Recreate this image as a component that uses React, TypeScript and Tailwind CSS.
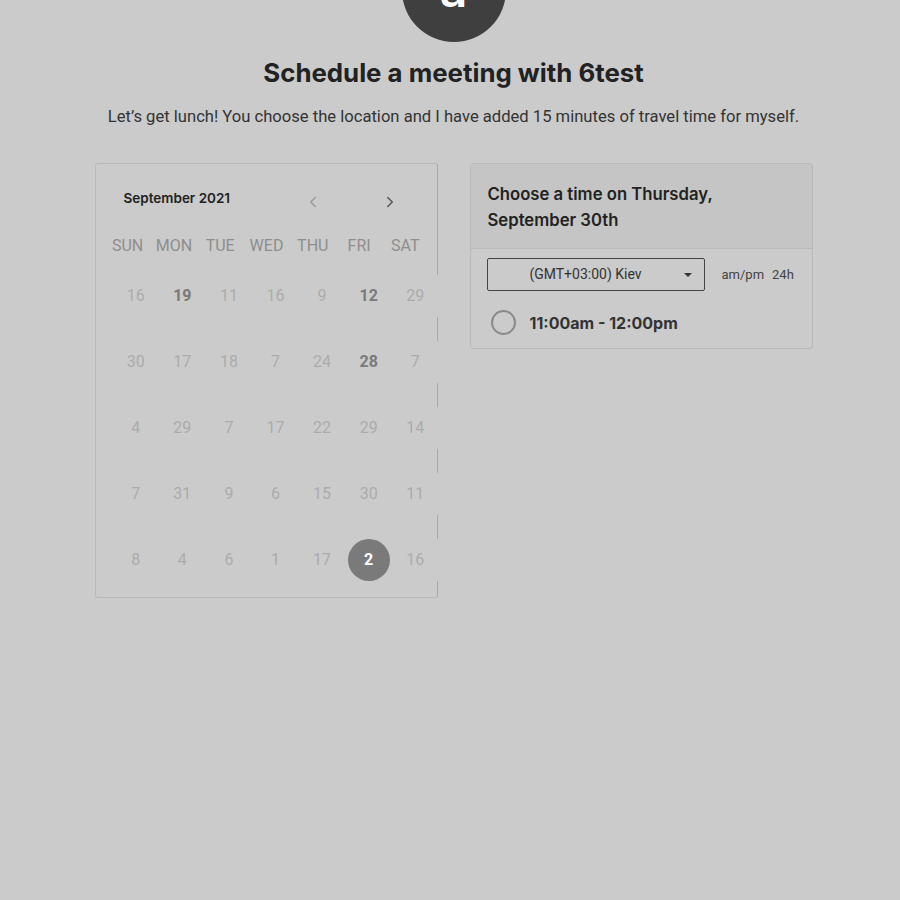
const weeks: { d: number; bold?: boolean; sel?: boolean }[][] = [
  [{ d: 16 }, { d: 19, bold: true }, { d: 11 }, { d: 16 }, { d: 9 }, { d: 12, bold: true }, { d: 29 }],
  [{ d: 30 }, { d: 17 }, { d: 18 }, { d: 7 }, { d: 24 }, { d: 28, bold: true }, { d: 7 }],
  [{ d: 4 }, { d: 29 }, { d: 7 }, { d: 17 }, { d: 22 }, { d: 29 }, { d: 14 }],
  [{ d: 7 }, { d: 31 }, { d: 9 }, { d: 6 }, { d: 15 }, { d: 30 }, { d: 11 }],
  [{ d: 8 }, { d: 4 }, { d: 6 }, { d: 1 }, { d: 17 }, { d: 2, sel: true }, { d: 16 }],
];

const DAYS = ["SUN", "MON", "TUE", "WED", "THU", "FRI", "SAT"];

const inter = "font-['Inter','Liberation_Sans',sans-serif]";
const roboto = "font-['Roboto','Liberation_Sans',sans-serif]";

function Chevron({ dir, className }: { dir: "left" | "right"; className?: string }) {
  return (
    <svg viewBox="0 0 24 24" className={className} fill="none" stroke="currentColor" strokeWidth={2} strokeLinecap="round" strokeLinejoin="round" aria-hidden>
      {dir === "left" ? <path d="M15 6l-6 6 6 6" /> : <path d="M9 6l6 6-6 6" />}
    </svg>
  );
}

function Calendar() {
  return (
    <div className="h-[435px] w-[343px] rounded-[3px] border border-[#b9b9b9] border-r-[#a8a8a8] bg-[#cbcbcb]">
      <div className="mt-[22px] flex h-[24px] items-center pl-[28px]">
        <span className={`${inter} text-[13.5px] font-semibold text-[#222]`}>September 2021</span>
        <Chevron dir="left" className="ml-[74px] mt-[8px] h-[18px] w-[18px] text-[#9a9a9a]" />
        <Chevron dir="right" className="ml-[59px] mt-[8px] h-[18px] w-[18px] text-[#555]" />
      </div>
      <div className={`${roboto} ml-[9px] mt-[26px] grid h-[20px] w-[324px] grid-cols-7 text-[16px] leading-[20px] text-[#8e8e8e]`}>
        {DAYS.map((d) => (
          <span key={d} className="text-center">
            {d}
          </span>
        ))}
      </div>
      <div className={`${roboto} ml-[17px] mt-[7px] w-[326px]`}>
        {weeks.map((w, i) => (
          <div key={i} className="grid h-[66px] grid-cols-7 items-center">
            {w.map((c, j) => (
              <div key={j} className="flex h-[42px] items-center justify-center bg-[#cbcbcb]">
                {c.sel ? (
                  <span className="flex h-[42px] w-[42px] items-center justify-center rounded-full bg-[#7a7a7a] text-[16px] font-bold text-white">
                    {c.d}
                  </span>
                ) : (
                  <span className={`text-[16px] ${c.bold ? "font-bold text-[#7a7a7a]" : "text-[#ababab]"}`}>{c.d}</span>
                )}
              </div>
            ))}
          </div>
        ))}
      </div>
    </div>
  );
}

function TimePanel() {
  return (
    <div className="w-[343px] rounded-[3px] border border-[#b9b9b9] bg-[#cbcbcb]">
      <div className={`${inter} border-b border-[#b9b9b9] bg-[#c5c5c5] pb-[15px] pl-[17px] pt-[17px] text-[16.7px] font-semibold leading-[26px] text-[#222]`}>
        Choose a time on Thursday,
        <br />
        September 30th
      </div>
      <div className={`${roboto} flex items-center pl-[16px] pt-[9px]`}>
        <div className="relative flex h-[33px] w-[218px] items-center justify-center rounded-[2px] border border-[#444] text-[14px] text-[#333]">
          <span className="-ml-[20px]">(GMT+03:00) Kiev</span>
          <span className="absolute right-[12px] top-[14px] h-0 w-0 border-x-[4px] border-t-[4px] border-x-transparent border-t-[#333]" />
        </div>
        <span className="ml-[17px] text-[13px] text-[#444]">am/pm</span>
        <span className="ml-[8px] text-[13px] text-[#444]">24h</span>
      </div>
      <div className="mt-[19px] flex h-[25px] items-center pl-[20px]">
        <span className="h-[25px] w-[25px] rounded-full border-2 border-[#8a8a8a]" />
        <span className={`${inter} ml-[14px] text-[16px] font-bold text-[#333]`}>11:00am - 12:00pm</span>
      </div>
      <div className="h-[13px]" />
    </div>
  );
}

export default function App() {
  return (
    <div className="min-h-[900px] overflow-hidden bg-[#cbcbcb] pl-[7px]">
      <div className="flex flex-col items-center">
        <div className="-mt-[62px] flex h-[104px] w-[104px] items-center justify-center rounded-full bg-[#3f3f3f]">
          <span className={`${inter} text-[48px] font-semibold leading-none text-white`}>a</span>
        </div>
        <h1 className={`${inter} mt-[15px] text-[25.8px] font-bold leading-[32px] text-[#222]`}>
          Schedule a meeting with 6test
        </h1>
        <p className={`${roboto} mt-[16px] text-[16.6px] leading-[24px] text-[#333]`}>
          Let’s get lunch! You choose the location and I have added 15 minutes of travel time for myself.
        </p>
        <div className="mt-[34px] flex items-start gap-[32px]">
          <Calendar />
          <TimePanel />
        </div>
      </div>
    </div>
  );
}
